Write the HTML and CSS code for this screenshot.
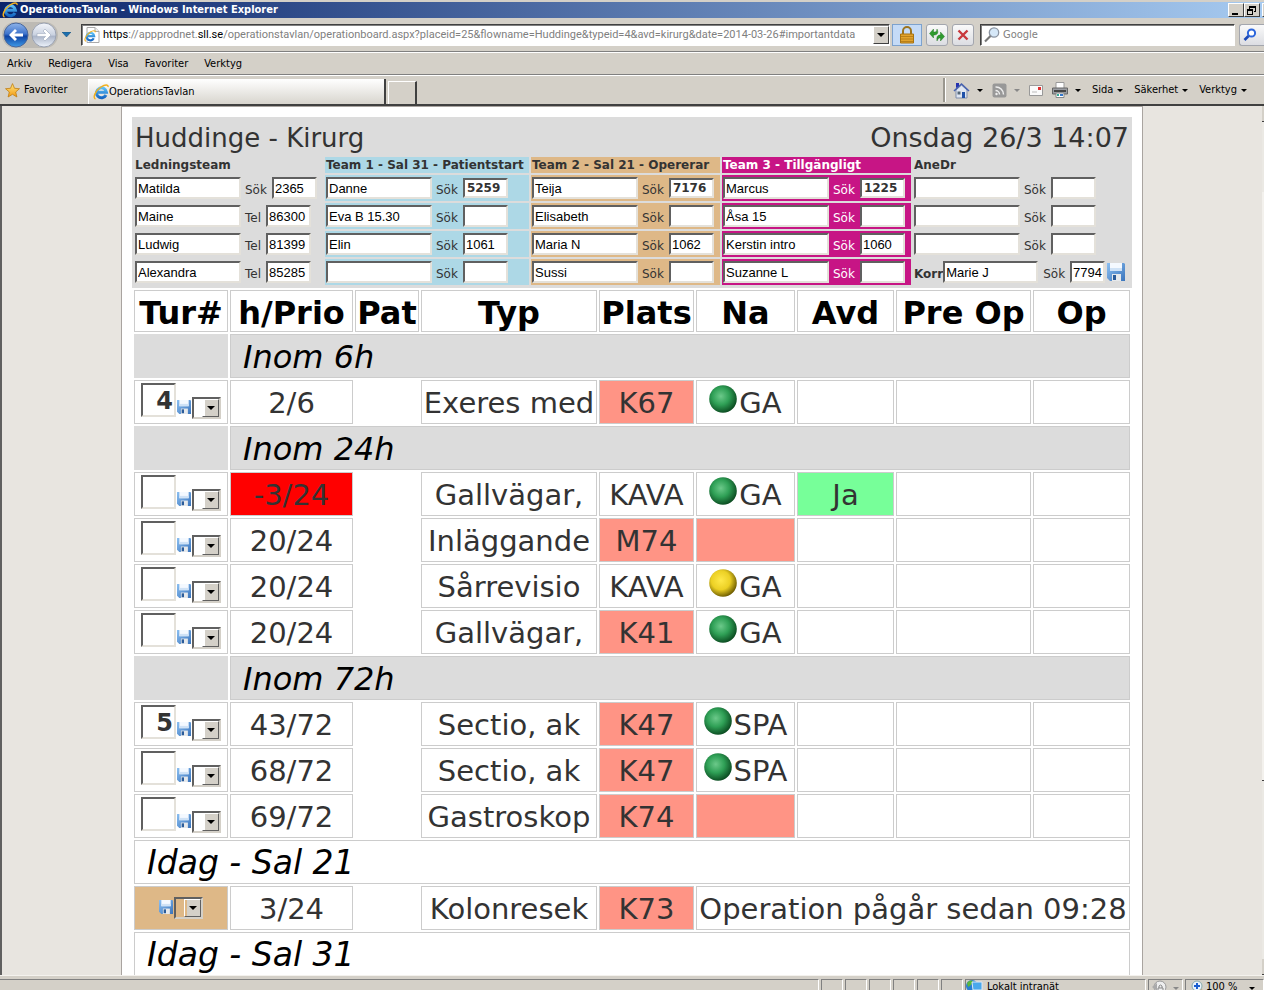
FILE: index.html
```html
<!DOCTYPE html>
<html lang="sv">
<head>
<meta charset="utf-8">
<title>OperationsTavlan</title>
<link rel="stylesheet" href="styles.css">
</head>
<body>
<svg class="defs" aria-hidden="true">
  <defs>
    <linearGradient id="g-blue" x1="0" y1="0" x2="0" y2="1"><stop offset="0" stop-color="#8fb4ea"/><stop offset=".45" stop-color="#3f74cc"/><stop offset=".55" stop-color="#0e43a4"/><stop offset="1" stop-color="#3f9be8"/></linearGradient>
    <linearGradient id="g-pale" x1="0" y1="0" x2="0" y2="1"><stop offset="0" stop-color="#f4f6fb"/><stop offset=".5" stop-color="#c9d1e0"/><stop offset=".55" stop-color="#aab4c8"/><stop offset="1" stop-color="#eef4fc"/></linearGradient>
    <linearGradient id="g-save" x1="0" y1="0" x2="1" y2="1"><stop offset="0" stop-color="#8cc0f2"/><stop offset="1" stop-color="#3a74bc"/></linearGradient>
    <linearGradient id="g-star" x1="0" y1="0" x2="0" y2="1"><stop offset="0" stop-color="#ffe680"/><stop offset="1" stop-color="#f39a12"/></linearGradient>
    <radialGradient id="g-green" cx=".42" cy=".4" r=".62"><stop offset="0" stop-color="#6cc98a"/><stop offset=".5" stop-color="#2fa056"/><stop offset="1" stop-color="#0b4a20"/></radialGradient>
    <radialGradient id="g-yellow" cx=".42" cy=".4" r=".62"><stop offset="0" stop-color="#ffe94a"/><stop offset=".55" stop-color="#ecd024"/><stop offset="1" stop-color="#6b5a00"/></radialGradient>
    <linearGradient id="g-ie" x1="0" y1="0" x2="0" y2="1"><stop offset="0" stop-color="#5cc0f6"/><stop offset="1" stop-color="#1668c4"/></linearGradient>
  </defs>
  <symbol id="ie" viewBox="0 0 16 16">
    <path d="M13 11A5 5 0 1 1 13.500 8.300H5" fill="none" stroke="url(#g-ie)" stroke-width="3"/>
    <path d="M2.500 15C-.5 14 2 7 8 3 12 .4 15.500.4 15 3" fill="none" stroke="#f2b01e" stroke-width="1.500"/>
  </symbol>
  <symbol id="save" viewBox="0 0 18 18">
    <path d="M0 0h17l1 1v17H3l-3-3z" fill="url(#g-save)"/>
    <path d="M3 0h12v8H3z" fill="#f4f9ff"/><path d="M3 5h12v3H3z" fill="#cfe2f6"/>
    <path d="M5 11h9v7H5z" fill="#e6e9ec"/><path d="M6 12h3v5H6z" fill="#2b5c9a"/>
  </symbol>
  <symbol id="green" viewBox="0 0 28 28"><circle cx="14" cy="14" r="13.800" fill="url(#g-green)"/></symbol>
  <symbol id="yellow" viewBox="0 0 28 28"><circle cx="14" cy="14" r="13.800" fill="url(#g-yellow)"/></symbol>
</svg>

<div class="window">
  <header class="titlebar">
    <svg class="i16"><use href="#ie"/></svg>
    <span class="titlebar-text">OperationsTavlan - Windows Internet Explorer</span>
    <button class="winbtn" aria-label="Minimera"><svg width="13" height="11"><path d="M3 8h6v2H3z"/></svg></button>
    <button class="winbtn" aria-label="Återställ"><svg width="13" height="11"><path d="M4 1h7v6H9V6h1V3H5v1H4zM2 4h6v6H2zM3 6v3h4V6z" fill-rule="evenodd"/></svg></button>
    <button class="winbtn cut" aria-label="Stäng"></button>
  </header>

  <div class="addressbar">
    <div class="travel">
      <button class="plain" aria-label="Bakåt"><svg width="26" height="26" viewBox="0 0 26 26"><circle cx="13" cy="13" r="12" fill="url(#g-blue)" stroke="#49679c"/><path d="M6 13l6-6 2 2-2.600 2.600H20v2.800h-8.600L14 17l-2 2z" fill="#fff"/></svg></button>
      <button class="plain" aria-label="Framåt"><svg width="26" height="26" viewBox="0 0 26 26"><circle cx="13" cy="13" r="12" fill="url(#g-pale)" stroke="#9aa2b2"/><path d="M20 13l-6-6-2 2 2.600 2.600H6v2.800h8.600L12 17l2 2z" fill="#fff" stroke="#9aa6bb" stroke-width=".6"/></svg></button>
    </div>
    <button class="plain recent" aria-label="Senaste sidor"><svg width="9" height="5"><path d="M0 0h9L4.500 5z" fill="#1c6fae" stroke="#17527e" stroke-width=".6"/></svg></button>
    <div class="field address">
      <svg width="16" height="16" viewBox="0 0 16 16"><path d="M3 .5h8l4 4v11H3z" fill="#fff" stroke="#aaa"/><path d="M11 .5v4h4" fill="#eee" stroke="#aaa"/><use href="#ie" x="0" y="3" width="12" height="12"/></svg>
      <div class="url" role="textbox" aria-label="Adress" contenteditable="true" spellcheck="false"><b>https</b>://appprodnet.<b>sll.se</b>/operationstavlan/operationboard.aspx?placeid=25&amp;flowname=Huddinge&amp;typeid=4&amp;avd=kirurg&amp;date=2014-03-26#importantdata</div>
      <button class="drop" aria-label="Visa adresser"><i class="tri"></i></button>
    </div>
    <button class="tool lock" aria-label="Säkerhetsrapport"><svg width="16" height="18" viewBox="0 0 16 18"><path d="M4 9V5a4 4 0 0 1 8 0v4" fill="none" stroke="#9c7420" stroke-width="2"/><path d="M1.500 8h13v9h-13z" fill="#e2a32c" stroke="#a87310"/><path d="M2 10.500h12M2 13h12M2 15.500h12" stroke="#b9801a"/></svg></button>
    <button class="tool" aria-label="Uppdatera"><svg width="16" height="16" viewBox="0 0 16 16"><path d="M.5 6.500L4.500 2v3h1.500Q8 5 8 2q2.500 5-2 6H4.500v3zM15.500 9.500L11.500 5v3h-1Q7 8.500 8 14q1-3 2.500-3h1v3z" fill="#2f9a2f" stroke="#167016" stroke-width=".4"/></svg></button>
    <button class="tool" aria-label="Stopp"><svg width="12" height="12" viewBox="0 0 12 12"><path d="M1.500 1.500l9 9M10.500 1.500l-9 9" stroke="#c8383c" stroke-width="2.400"/></svg></button>
    <div class="field search">
      <svg width="16" height="16" viewBox="0 0 16 16"><circle cx="10" cy="5.500" r="4.700" fill="#d6e8f8" stroke="#8c95a2" stroke-width="1.300"/><path d="M6.500 9L1 14.500" stroke="#777" stroke-width="2.200"/></svg>
      <input type="text" placeholder="Google" aria-label="Sök med Google">
    </div>
    <button class="tool go" aria-label="Sök"><svg width="14" height="14" viewBox="0 0 14 14"><circle cx="8.500" cy="5" r="3.600" fill="#fff" stroke="#2c66dc" stroke-width="2"/><path d="M5.500 8L1.500 12" stroke="#1c49b8" stroke-width="2.600"/></svg></button>
  </div>

  <nav class="menubar">
    <button>Arkiv</button><button>Redigera</button><button>Visa</button><button>Favoriter</button><button>Verktyg</button>
  </nav>

  <div class="tabbar">
    <button class="fav"><svg width="15" height="15" viewBox="0 0 15 15"><path d="M7.500.6l2 4.700 5 .4-3.800 3.300 1.200 5-4.400-2.700L3.100 14l1.200-5L.5 5.700l5-.4z" fill="url(#g-star)" stroke="#c07d12" stroke-width=".8"/></svg>Favoriter</button>
    <button class="tab"><svg class="i16"><use href="#ie"/></svg>OperationsTavlan</button>
    <button class="newtab" aria-label="Ny flik"></button>
    <div class="commands">
      <button class="icon-cmd" aria-label="Startsida"><svg width="17" height="17" viewBox="0 0 17 17"><path d="M3 8l5.500-5L14 8v8H3z" fill="#dfe6f2" stroke="#7f8dab"/><path d="M1 9l7.500-7L16 9" fill="none" stroke="#4762b0" stroke-width="1.600"/><path d="M3 1h3v3L3 6z" fill="#2633b0"/><path d="M9 10h3v6H9z" fill="#1e50a8"/><path d="M4.500 9.500h3v3h-3z" fill="#567"/></svg><i class="tri"></i></button>
      <button class="icon-cmd off" aria-label="Feeds"><svg width="15" height="15" viewBox="0 0 15 15"><rect x=".5" y=".5" width="14" height="14" rx="2" fill="#989898"/><path d="M3.500 7.500a4 4 0 0 1 4 4M3.500 4a7.500 7.500 0 0 1 8 7.500" fill="none" stroke="#eee" stroke-width="1.500"/><circle cx="4.500" cy="11" r="1.200" fill="#eee"/></svg><i class="tri"></i></button>
      <button class="icon-cmd" aria-label="Läs e-post"><svg width="14" height="11" viewBox="0 0 14 11"><path d="M.5.5h13v10H.5z" fill="#fafafa" stroke="#999"/><path d="M9 2h3v3H9z" fill="#e03030"/><path d="M3 7h5" stroke="#bbb"/></svg></button>
      <button class="icon-cmd" aria-label="Skriv ut"><svg width="16" height="16" viewBox="0 0 16 16"><path d="M4 .5h8v6H4z" fill="#fff" stroke="#999"/><path d="M.5 6h15v6H.5z" fill="#9a9da2" stroke="#666"/><path d="M2 8h12v2H2z" fill="#444"/><path d="M4 11h8v4.500H4z" fill="#fff" stroke="#888"/><path d="M5 12h2v2H5z" fill="#3a9"/><path d="M8 12h3v2H8z" fill="#37c"/></svg><i class="tri"></i></button>
      <button class="text-cmd">Sida<i class="tri"></i></button>
      <button class="text-cmd">Säkerhet<i class="tri"></i></button>
      <button class="text-cmd">Verktyg<i class="tri"></i></button>
    </div>
  </div>

  <div class="viewport">
    <main class="sheet">
      <section class="panel">
        <div class="panel-title"><h1>Huddinge - Kirurg</h1><time>Onsdag 26/3 14:07</time></div>
        <div class="teams">
          <div class="team">
            <h2>Ledningsteam</h2>
            <div class="member"><input type="text" value="Matilda" aria-label="Namn"><label>Sök <input type="text" value="2365"></label></div>
            <div class="member"><input type="text" value="Maine" aria-label="Namn"><label>Tel <input type="text" value="86300"></label></div>
            <div class="member"><input type="text" value="Ludwig" aria-label="Namn"><label>Tel <input type="text" value="81399"></label></div>
            <div class="member"><input type="text" value="Alexandra" aria-label="Namn"><label>Tel <input type="text" value="85285"></label></div>
          </div>
          <div class="team blue">
            <h2>Team 1 - Sal 31 - Patientstart</h2>
            <div class="member"><input type="text" value="Danne" aria-label="Namn"><label>Sök <input class="strong" type="text" value="5259"></label></div>
            <div class="member"><input type="text" value="Eva B 15.30" aria-label="Namn"><label>Sök <input type="text"></label></div>
            <div class="member"><input type="text" value="Elin" aria-label="Namn"><label>Sök <input type="text" value="1061"></label></div>
            <div class="member"><input type="text" aria-label="Namn"><label>Sök <input type="text"></label></div>
          </div>
          <div class="team tan">
            <h2>Team 2 - Sal 21 - Opererar</h2>
            <div class="member"><input type="text" value="Teija" aria-label="Namn"><label>Sök <input class="strong" type="text" value="7176"></label></div>
            <div class="member"><input type="text" value="Elisabeth" aria-label="Namn"><label>Sök <input type="text"></label></div>
            <div class="member"><input type="text" value="Maria N" aria-label="Namn"><label>Sök <input type="text" value="1062"></label></div>
            <div class="member"><input type="text" value="Sussi" aria-label="Namn"><label>Sök <input type="text"></label></div>
          </div>
          <div class="team pink">
            <h2>Team 3 - Tillgängligt</h2>
            <div class="member"><input type="text" value="Marcus" aria-label="Namn"><label>Sök <input class="strong" type="text" value="1225"></label></div>
            <div class="member"><input type="text" value="Åsa 15" aria-label="Namn"><label>Sök <input type="text"></label></div>
            <div class="member"><input type="text" value="Kerstin intro" aria-label="Namn"><label>Sök <input type="text" value="1060"></label></div>
            <div class="member"><input type="text" value="Suzanne L" aria-label="Namn"><label>Sök <input type="text"></label></div>
          </div>
          <div class="team">
            <h2>AneDr</h2>
            <div class="member"><input type="text" aria-label="Namn"><label>Sök <input type="text"></label></div>
            <div class="member"><input type="text" aria-label="Namn"><label>Sök <input type="text"></label></div>
            <div class="member"><input type="text" aria-label="Namn"><label>Sök <input type="text"></label></div>
            <div class="member korr"><label class="korr-name"><b>Korr</b><input type="text" value="Marie J"></label><label>Sök <input type="text" value="7794"></label><button class="plain" aria-label="Spara"><svg width="18" height="18"><use href="#save"/></svg></button></div>
          </div>
        </div>
      </section>

      <table class="board">
        <colgroup><col class="c-tur"><col class="c-prio"><col class="c-pat"><col class="c-typ"><col class="c-plats"><col class="c-na"><col class="c-avd"><col class="c-pre"><col class="c-op"></colgroup>
        <thead><tr><th>Tur#</th><th>h/Prio</th><th>Pat</th><th>Typ</th><th>Plats</th><th>Na</th><th>Avd</th><th>Pre Op</th><th>Op</th></tr></thead>
        <tbody>
          <tr class="group"><td class="lead"></td><td colspan="8">Inom 6h</td></tr>
          <tr><td><div class="turn"><input type="text" value="4" aria-label="Tur"><button class="plain" aria-label="Spara"><svg width="14" height="14"><use href="#save"/></svg></button><span class="pick"><select aria-label="Val"><option></option></select><i class="tri"></i></span></div></td><td>2/6</td><td class="none"></td><td>Exeres med</td><td class="red">K67</td><td><span class="na"><svg width="28" height="28"><use href="#green"/></svg>GA</span></td><td></td><td></td><td></td></tr>
          <tr class="group"><td class="lead"></td><td colspan="8">Inom 24h</td></tr>
          <tr><td><div class="turn"><input type="text" aria-label="Tur"><button class="plain" aria-label="Spara"><svg width="14" height="14"><use href="#save"/></svg></button><span class="pick"><select aria-label="Val"><option></option></select><i class="tri"></i></span></div></td><td class="late">-3/24</td><td class="none"></td><td>Gallvägar,</td><td>KAVA</td><td><span class="na"><svg width="28" height="28"><use href="#green"/></svg>GA</span></td><td class="ok">Ja</td><td></td><td></td></tr>
          <tr><td><div class="turn"><input type="text" aria-label="Tur"><button class="plain" aria-label="Spara"><svg width="14" height="14"><use href="#save"/></svg></button><span class="pick"><select aria-label="Val"><option></option></select><i class="tri"></i></span></div></td><td>20/24</td><td class="none"></td><td>Inläggande</td><td class="red">M74</td><td class="red"></td><td></td><td></td><td></td></tr>
          <tr><td><div class="turn"><input type="text" aria-label="Tur"><button class="plain" aria-label="Spara"><svg width="14" height="14"><use href="#save"/></svg></button><span class="pick"><select aria-label="Val"><option></option></select><i class="tri"></i></span></div></td><td>20/24</td><td class="none"></td><td>Sårrevisio</td><td>KAVA</td><td><span class="na"><svg width="28" height="28"><use href="#yellow"/></svg>GA</span></td><td></td><td></td><td></td></tr>
          <tr><td><div class="turn"><input type="text" aria-label="Tur"><button class="plain" aria-label="Spara"><svg width="14" height="14"><use href="#save"/></svg></button><span class="pick"><select aria-label="Val"><option></option></select><i class="tri"></i></span></div></td><td>20/24</td><td class="none"></td><td>Gallvägar,</td><td class="red">K41</td><td><span class="na"><svg width="28" height="28"><use href="#green"/></svg>GA</span></td><td></td><td></td><td></td></tr>
          <tr class="group"><td class="lead"></td><td colspan="8">Inom 72h</td></tr>
          <tr><td><div class="turn"><input type="text" value="5" aria-label="Tur"><button class="plain" aria-label="Spara"><svg width="14" height="14"><use href="#save"/></svg></button><span class="pick"><select aria-label="Val"><option></option></select><i class="tri"></i></span></div></td><td>43/72</td><td class="none"></td><td>Sectio, ak</td><td class="red">K47</td><td><span class="na"><svg width="28" height="28"><use href="#green"/></svg>SPA</span></td><td></td><td></td><td></td></tr>
          <tr><td><div class="turn"><input type="text" aria-label="Tur"><button class="plain" aria-label="Spara"><svg width="14" height="14"><use href="#save"/></svg></button><span class="pick"><select aria-label="Val"><option></option></select><i class="tri"></i></span></div></td><td>68/72</td><td class="none"></td><td>Sectio, ak</td><td class="red">K47</td><td><span class="na"><svg width="28" height="28"><use href="#green"/></svg>SPA</span></td><td></td><td></td><td></td></tr>
          <tr><td><div class="turn"><input type="text" aria-label="Tur"><button class="plain" aria-label="Spara"><svg width="14" height="14"><use href="#save"/></svg></button><span class="pick"><select aria-label="Val"><option></option></select><i class="tri"></i></span></div></td><td>69/72</td><td class="none"></td><td>Gastroskop</td><td class="red">K74</td><td class="red"></td><td></td><td></td><td></td></tr>
          <tr class="room"><td colspan="9">Idag - Sal 21</td></tr>
          <tr><td class="sand"><div class="turn"><button class="plain" aria-label="Spara"><svg width="14" height="14"><use href="#save"/></svg></button><span class="pick"><select aria-label="Val"><option></option></select><i class="tri"></i></span></div></td><td>3/24</td><td class="none"></td><td>Kolonresek</td><td class="red">K73</td><td colspan="4">Operation pågår sedan 09:28</td></tr>
          <tr class="room"><td colspan="9">Idag - Sal 31</td></tr>
        </tbody>
      </table>
    </main>
    <div class="scrollbar"><span class="cap"></span><span class="track"></span><span class="thumb"></span><span class="track low"></span><span class="cap"></span></div>
  </div>

  <footer class="statusbar">
    <span class="cell grow"></span><span class="cell"></span><span class="cell"></span><span class="cell"></span><span class="cell"></span><span class="cell"></span><span class="cell"></span>
    <span class="cell zone"><svg width="17" height="15" viewBox="0 0 17 15"><circle cx="6" cy="6" r="6" fill="#2a7fd0"/><path d="M1 3c2-3 5-3 6-2l-2 4-3 2z" fill="#5cb83c"/><path d="M6 2h10v8H7z" fill="#4aa8ec" stroke="#dde8f4"/><path d="M8 11h6v2H8z" fill="#ccc"/></svg>Lokalt intranät</span>
    <span class="cell protect"><svg width="17" height="15" viewBox="0 0 17 15"><circle cx="9" cy="7" r="6" fill="#eee" stroke="#999"/><path d="M1 7l5-4v8z" fill="#aaa"/><path d="M7 8h5v5H7zM8 8V6q1.500-2 3 0v2" fill="none" stroke="#888"/></svg><i class="tri"></i></span>
    <button class="cell scale"><svg width="14" height="14" viewBox="0 0 14 14"><circle cx="6" cy="6" r="5" fill="#eaf3fc" stroke="#8aa"/><path d="M6 3v6M3 6h6" stroke="#1c5fd0" stroke-width="2"/><path d="M10 10l3 3" stroke="#a73" stroke-width="2"/></svg><span>100 %</span><i class="tri"></i></button>
  </footer>
</div>
</body>
</html>
```

FILE: styles.css
```css
* { box-sizing: border-box; }
html, body { margin: 0; height: 100%; overflow: hidden; }
body { font: 11px/14px "DejaVu Sans Condensed", "DejaVu Sans", sans-serif; color: #000; background: #d4d0c8; }
button, input, select { font: inherit; color: inherit; margin: 0; padding: 0; border: 0; border-radius: 0; background: none; }
svg { display: block; flex: none; }
.defs { position: absolute; width: 0; height: 0; }
.i16 { width: 16px; height: 16px; }
.tri { width: 0; height: 0; border: 3px solid transparent; border-top-color: #000; border-bottom: 0; }

.window { height: 100vh; display: flex; flex-direction: column; padding-top: 2px; }
.window > * { flex: none; }

.titlebar { height: 16px; display: flex; align-items: center; padding-left: 2px; background: linear-gradient(90deg, #0a246a, #a6caf0); color: #fff; }
.titlebar-text { flex: 1; font-weight: bold; padding-left: 2px; white-space: nowrap; }
.winbtn { width: 16px; height: 14px; background: #d4d0c8; color: #000; border: 1px solid; border-color: #fff #404040 #404040 #fff; }
.winbtn.cut { width: 2px; margin-left: 2px; border-right: 0; }

.addressbar { height: 34px; display: flex; align-items: center; padding-left: 2px; border-bottom: 1px solid #808080; }
.travel { display: flex; gap: 2px; padding: 0 1px; border-radius: 14px; background: #bdbab4; margin-top: 1px; }
.plain { display: block; flex: none; }
.recent { margin: 0 10px 0 4px; }
.field { height: 22px; display: flex; align-items: center; background: #fff; border: 1px solid; border-color: #404040 #fff #fff #404040; box-shadow: inset 1px 1px #808080; }
.address { flex: 1; min-width: 0; padding-left: 2px; gap: 3px; }
.url { flex: 1; min-width: 0; overflow: hidden; white-space: nowrap; font: 11px/16px Roboto, sans-serif; color: #808080; }
.url b { font-weight: normal; color: #000; }
.drop { width: 16px; height: 18px; display: grid; place-items: center; background: #d4d0c8; border: 1px solid; border-color: #fff #404040 #404040 #fff; }
.drop .tri { border-width: 4px; border-bottom: 0; }
.tool { width: 22px; height: 22px; margin-left: 4px; display: grid; place-items: center; flex: none; border: 1px solid #a3a6ae; border-radius: 3px; background: linear-gradient(#fafafa, #dcdde2); }
.tool.lock { width: 30px; margin-left: 2px; border-radius: 0; background: #c5dbf7; border-color: #7da2ce; }
.tool.go { width: 25px; justify-content: start; padding-left: 3px; border-right: 0; border-radius: 3px 0 0 3px; }
.search { width: 255px; margin-left: 6px; padding-left: 3px; gap: 3px; }
.search input { flex: 1; min-width: 0; outline: 0; }
.search input::placeholder { color: #808080; opacity: 1; }

.menubar { height: 23px; display: flex; align-items: center; gap: 16px; padding-left: 7px; border-top: 1px solid #fff; border-bottom: 1px solid #808080; }

.tabbar { height: 31px; display: flex; align-items: flex-end; border-top: 1px solid #fff; border-bottom: 2px solid #404040; }
.fav { width: 88px; padding-left: 5px; display: flex; align-items: center; gap: 4px; align-self: center; }
.tab { width: 298px; height: 25px; display: flex; align-items: center; padding-left: 4px; background: linear-gradient(#fff, #d8d5ce); border-left: 1px solid #fff; border-right: 2px solid #404040; }
.newtab { width: 29px; height: 23px; margin-left: 2px; border: 1px solid; border-width: 1px 2px 0 1px; border-color: #fff #404040 #fff #fff; }
.commands { margin-left: auto; align-self: center; height: 24px; display: flex; align-items: center; gap: 9px; padding: 0 17px 0 8px; border-left: 2px solid; border-left-color: #9a978f; box-shadow: inset 1px 0 #fff; }
.commands button { display: flex; align-items: center; gap: 4px; }
.commands .icon-cmd { gap: 7px; }
.commands .text-cmd { margin-left: 2px; }
.icon-cmd.off .tri { border-top-color: #888; }

.viewport { flex: 1 1 0 !important; min-height: 0; display: flex; border-left: 2px solid #606060; background: #e8e5e0; overflow: hidden; }
.sheet { flex: 1; max-width: 1022px; margin: 0 auto; padding: 10px 10px 0; min-height: 900px; background: #fff; border: 1px solid #a9a4a0; border-bottom: 0; font-family: "DejaVu Sans", sans-serif; color: #333; }
.scrollbar { width: 2px; display: flex; flex-direction: column; background: #d4d0c8; }
.scrollbar .cap { height: 16px; border-bottom: 1px solid #404040; }
.scrollbar .track { height: 70px; background: #ebe9e4; }
.scrollbar .thumb { flex: 1; background: #f3f1ed; border-bottom: 1px solid #404040; }
.scrollbar .low { height: 178px; }

.panel { padding: 0 2px 3px; background: #dcdcdc; }
.panel-title { height: 40px; display: flex; justify-content: space-between; align-items: center; padding: 2px 1px 0; font-size: 26px; line-height: 30px; }
.panel-title h1 { margin: 0; font: inherit; }
.panel-title time { font-size: 27px; }
.teams { display: grid; grid-template-columns: 189fr 204fr 189fr 189fr 217fr; gap: 2px; }
.team { display: grid; gap: 2px; min-width: 0; align-content: start; }
.team h2 { margin: 0; padding-left: 1px; font-size: 12px; line-height: 16px; white-space: nowrap; }
.member { height: 26px; display: flex; align-items: center; gap: 4px; padding-left: 1px; font-size: 12px; }
.blue > * { background: #add8e6; }
.tan > * { background: #deb887; }
.pink > * { background: #c71585; color: #fff; }
.member label { height: 26px; padding-top: 4px; display: flex; align-items: center; gap: 5px; }
.member input { width: 45px; height: 22px; padding-left: 1px; background: #fff; color: #000; border: 2px solid; border-color: #606060 #e4e1da #e4e1da #606060; font: 13px "Liberation Sans", sans-serif; }
.member > input { width: 106px; }
.member label input { margin-top: -4px; }
.member .strong { height: 20px; padding-left: 2px; font: bold 12px "DejaVu Sans", sans-serif; color: #333; }
.member .korr-name { gap: 0; }
.member .korr-name input { width: 95px; }
.korr label + label input { width: 35px; }
.member.korr { gap: 2px; }
.korr label + label { margin-left: 3px; }

.board { width: 100%; table-layout: fixed; border-collapse: separate; border-spacing: 2px; font-size: 29px; line-height: 36px; }
.c-tur { width: 94px; } .c-prio { width: 123px; } .c-pat { width: 64px; } .c-typ { width: 176px; } .c-plats { width: 95px; } .c-na { width: 99px; } .c-avd { width: 97px; } .c-pre { width: 135px; } .c-op { width: 97px; }
.board th, .board td { padding: 2px 0 0; border: 1px solid #ccc; text-align: center; white-space: nowrap; }
.board th { height: 42px; padding-top: 3px; font-size: 32px; color: #000; }
.board td { height: 44px; }
.board .none { border-color: transparent; }
.group td, .room td { font-size: 32px; font-style: italic; color: #000; }
.board .room td { font-size: 33px; }
.board .group td, .board .room td { text-align: left; padding: 2px 0 0 12px; }
.group td { background: #dcdcdc; }
.board .lead { border-color: #dcdcdc; }
.board .red { background: #ff9485; }
.board .late { background: #f00; }
.board .ok { background: #77ff99; }
.board .sand { background: #deb887; }
.na { display: flex; justify-content: center; align-items: center; gap: 2px; }
.na svg { margin-bottom: 8px; }
.turn { display: flex; justify-content: center; align-items: flex-end; gap: 1px; padding-bottom: 4px; }
.turn input { width: 35px; height: 34px; margin-bottom: 2px; padding: 2px 1px 0 0; background: #fff; border: 2px solid; border-color: #606060 #e4e1da #e4e1da #606060; font-size: 24px; font-weight: bold; text-align: right; }
.turn .plain { margin-bottom: 5px; }
.pick { display: flex; align-items: center; justify-content: flex-end; position: relative; width: 29px; height: 22px; border: 2px solid; border-color: #606060 #d4d0c8 #d4d0c8 #606060; }
.pick select { appearance: none; width: 100%; height: 100%; outline: 0; background: linear-gradient(#d4d0c8, #d4d0c8) right / 14px 100% no-repeat; }
.pick::after { content: ""; position: absolute; right: 0; top: 0; bottom: 0; width: 15px; border: 1px solid; border-color: #fff #606060 #606060 #fff; pointer-events: none; }
.pick .tri { position: absolute; right: 4px; border-width: 4px; border-bottom: 0; pointer-events: none; }
.sand .turn { align-items: center; padding-bottom: 2px; }
.sand .turn .plain { margin-bottom: 2px; }

.statusbar { height: 15px; display: flex; gap: 2px; align-items: flex-start; padding-top: 3px; overflow: hidden; border-top: 1px solid #f4f2ee; }
.cell { width: 22px; height: 22px; flex: none; display: flex; align-items: flex-start; border: 1px solid #808080; border-right-color: #fff; }
.cell.grow { flex: 1; border-left: 0; }
.cell.zone { width: 181px; gap: 4px; }
.cell.protect { width: 35px; gap: 5px; padding-left: 2px; }
.cell.protect .tri { margin-top: 7px; border-top-color: #888; }
.cell.scale { width: 79px; gap: 1px; padding: 0 8px 0 5px; }
.cell.scale .tri { margin: 7px 0 0 auto; }
```
